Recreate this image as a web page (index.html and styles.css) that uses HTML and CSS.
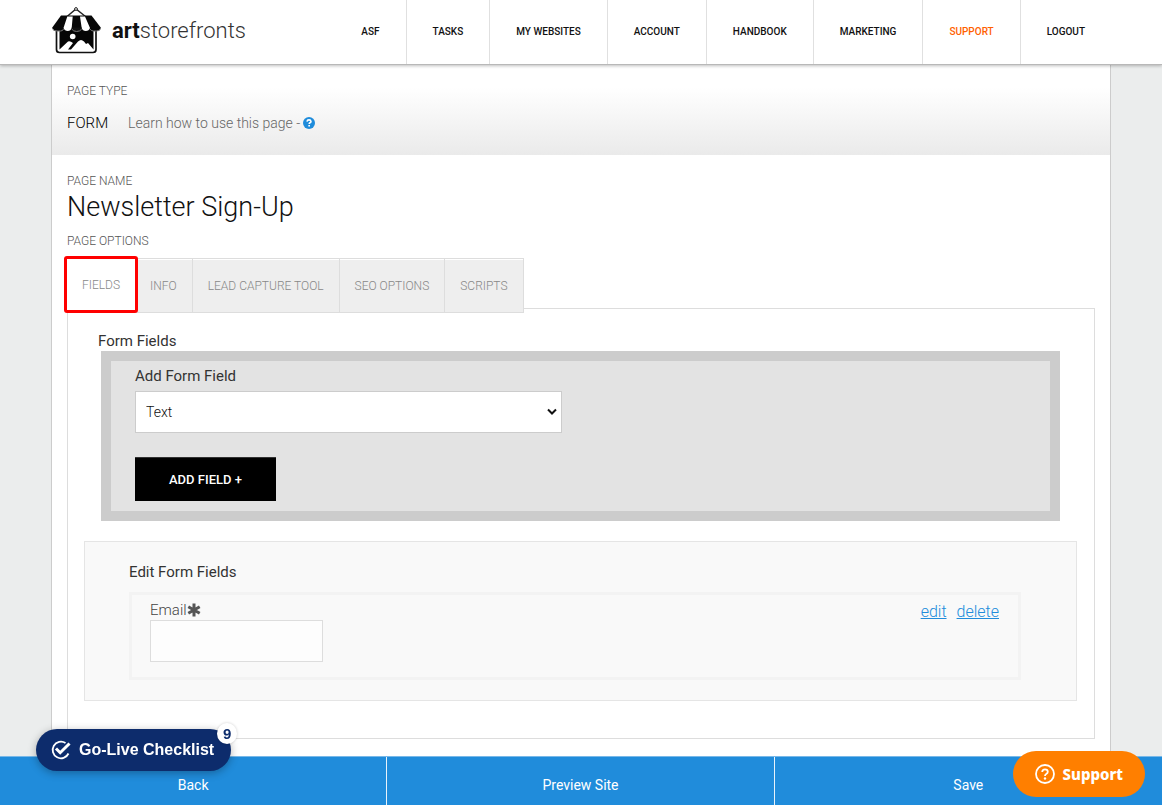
FILE: index.html
```html
<!DOCTYPE html>
<html lang="en">
<head>
<meta charset="utf-8">
<meta name="viewport" content="width=device-width, initial-scale=1">
<title>Newsletter Sign-Up - Art Storefronts</title>
<link rel="stylesheet" href="styles.css">
</head>
<body>
<header class="topbar">
  <div class="topbar-inner">
    <a class="brand" href="#">
      <svg class="brand-mark" viewBox="0 0 50 47" aria-hidden="true">
        <path d="M16 9.500L25 2L34.500 9.500" fill="none" stroke="#222" stroke-width="1.400"/>
        <circle cx="25" cy="2" r="1.400" fill="#fff" stroke="#222"/>
        <path d="M5.500 22V42.500q0 3 3 3H42q3 0 3-3V22" fill="#fff" stroke="#111" stroke-width="1.700"/>
        <path d="M8.500 21V42.500L17 34.500Q19 33.500 22 36L17 42.500H20L27 34.500Q30 31.500 33 34.500L35 37L37 36L42.500 42.500V21Z" fill="#050505"/>
        <circle cx="21.700" cy="29.500" r="2.800" fill="#fff"/>
        <path d="M10 8.500H40.500L49.700 20.500q0 3.500-4 3.500H5.300q-4 0-4-3.500Z" fill="#080808"/>
        <path d="M16.300 9.500H21.700L20.700 21q-1 3-4 3t-4.200-3ZM29 9.500H34L39 21q-1 3-4.200 3t-4.100-3Z" fill="#fff"/>
        <path d="M20.700 20.500V22q1.500 2.500 5 2.500t5-2.500V20.500Z" fill="#111"/>
        <path d="M2 22q1 2 4 2h3.500q2.500 0 3-2M20.700 22q1.500 2.500 5 2.500t5-2.500M39 22q1 2 3.500 2H45.500q3 0 3.700-2" fill="none" stroke="#777" stroke-width="1"/>
      </svg>
      <span class="brand-name"><b>art</b>storefronts</span>
    </a>
    <nav class="main-nav">
      <a href="#">ASF</a>
      <a href="#">Tasks</a>
      <a href="#">My Websites</a>
      <a href="#">Account</a>
      <a href="#">Handbook</a>
      <a href="#">Marketing</a>
      <a class="is-highlighted" href="#">Support</a>
      <a href="#">Logout</a>
    </nav>
  </div>
</header>

<main class="page">
  <section class="page-type">
    <p class="caption">Page Type</p>
    <div class="type-row">
      <span class="type-name">FORM</span>
      <a class="help-link" href="#">Learn how to use this page -
        <svg class="help-icon" viewBox="0 0 12 12" aria-hidden="true">
          <circle cx="6" cy="6" r="6" fill="#1f8cdb"/>
          <path d="M4 4.600Q4.200 2.900 6 2.900T8 4.500Q8 5.300 7 5.800Q6.200 6.200 6.200 7" fill="none" stroke="#fff" stroke-width="1.600"/>
          <path d="M5.300 8h1.700v1.600H5.300z" fill="#fff"/>
        </svg>
      </a>
    </div>
  </section>

  <section class="page-body">
    <p class="caption">Page Name</p>
    <h1 class="page-title">Newsletter Sign-Up</h1>
    <p class="caption">Page Options</p>

    <div class="tabs" role="tablist">
      <button class="tab is-active" type="button" role="tab" aria-selected="true">Fields</button>
      <button class="tab" type="button" role="tab">Info</button>
      <button class="tab" type="button" role="tab">Lead Capture Tool</button>
      <button class="tab" type="button" role="tab">SEO Options</button>
      <button class="tab" type="button" role="tab">Scripts</button>
    </div>

    <div class="tab-panel">
      <h2 class="heading panel-heading">Form Fields</h2>
      <div class="add-box">
        <label class="heading" for="field-type">Add Form Field</label>
        <div class="select-wrap">
          <select class="select" id="field-type"><option>Text</option></select>
          <svg class="select-arrow" viewBox="0 0 10 8" aria-hidden="true"><path d="M1 1.500L5 5.500L9 1.500" fill="none" stroke="#111" stroke-width="2"/></svg>
        </div>
        <button class="add-button" type="button">ADD FIELD +</button>
      </div>

      <div class="edit-box">
        <h2 class="heading">Edit Form Fields</h2>
        <div class="field-row">
          <div class="field">
            <label class="field-label" for="email">Email<svg class="required" viewBox="0 0 14 14" aria-hidden="true"><path d="M7 0.500V13.500M1.300 3.700L12.700 10.300M12.700 3.700L1.300 10.300" stroke="#555" stroke-width="3"/></svg></label>
            <input class="text-input" id="email" type="text">
          </div>
          <div class="field-actions">
            <a href="#">edit</a>
            <a href="#">delete</a>
          </div>
        </div>
      </div>
    </div>
  </section>
</main>

<footer class="action-bar">
  <button type="button">Back</button>
  <button type="button">Preview Site</button>
  <button type="button">Save</button>
</footer>

<button class="checklist" type="button">
  <svg class="checklist-icon" viewBox="0 0 20 20" aria-hidden="true">
    <path d="M14.500 3A8.300 8.300 0 1 0 17.500 13.500" fill="none" stroke="#fff" stroke-width="1.800"/>
    <path d="M5 8.500L9.200 12.700L18.500 3.500" fill="none" stroke="#fff" stroke-width="3"/>
  </svg>
  Go-Live Checklist
  <span class="badge">9</span>
</button>

<button class="support" type="button">
  <svg class="support-icon" viewBox="0 0 20 20" aria-hidden="true">
    <circle cx="10" cy="10" r="9" fill="none" stroke="#fff" stroke-width="1.800"/>
    <path d="M7.200 8Q7.300 5.300 10 5.300T12.800 7.700Q12.800 9 11.200 10Q10 10.700 10 12" fill="none" stroke="#fff" stroke-width="1.800"/>
    <circle cx="10" cy="14.500" r="1.200" fill="#fff"/>
  </svg>
  Support
</button>
</body>
</html>
```
FILE: styles.css
```css
:root {
  --line: #ddd;
  --blue: #208cdb;
  --font: Roboto, "Liberation Sans", sans-serif;
}

* { box-sizing: border-box; }

body {
  display: flex;
  flex-direction: column;
  min-height: 100vh;
  margin: 0;
  background: #ebeded;
  color: #222;
  font-family: var(--font);
  font-size: 15px;
  font-weight: 300;
}

h1, h2, p { margin: 0; }
button, input, select { font-family: inherit; }
svg { display: block; }

.topbar {
  position: relative;
  background: #fff;
  border-bottom: 1px solid #b8b8b8;
  box-shadow: 0 1px 3px rgba(0, 0, 0, 0.25);
}

.topbar-inner {
  display: flex;
  justify-content: space-between;
  width: 100%;
  max-width: 1060px;
  height: 64px;
  margin: 0 auto;
}

.brand {
  display: flex;
  align-items: center;
  gap: 11px;
  height: 60px;
  color: #333;
  text-decoration: none;
}

.brand-mark { width: 50px; height: 47px; }
.brand-name { font-size: 22px; }
.brand-name b { color: #111; font-weight: 700; }

.main-nav { display: flex; }

.main-nav a {
  padding: 0 26px;
  border-left: 1px solid #e0e0e0;
  color: #111;
  font-size: 10px;
  font-weight: 500;
  line-height: 64px;
  text-decoration: none;
  text-transform: uppercase;
}

.main-nav a:first-child { border-left: 0; }
.main-nav a.is-highlighted { color: #ff6100; }

.page {
  flex: 1;
  width: 100%;
  max-width: 1060px;
  margin: 0 auto;
  background: #fff;
  border: 1px solid #ccc;
  border-width: 0 1px;
}

.page-type {
  padding: 16px 15px 22px;
  background: linear-gradient(#fff 25%, #eaeaea);
}

.caption {
  color: #555;
  font-size: 12px;
  line-height: 20px;
  text-transform: uppercase;
}

.type-row {
  display: flex;
  gap: 20px;
  margin-top: 12px;
  font-size: 14px;
  line-height: 20px;
}

.type-name { color: #000; font-size: 15px; }

.help-link {
  display: flex;
  align-items: center;
  gap: 3px;
  color: #666;
  text-decoration: none;
}

.help-icon { width: 12px; height: 12px; }

.page-body { padding: 16px 15px; }

.page-title {
  margin-bottom: 8px;
  color: #111;
  font-size: 27px;
  font-weight: 300;
  line-height: 32px;
}

.tabs {
  position: relative;
  display: flex;
  margin: 7px 0 -5px;
}

.tab {
  height: 55px;
  padding: 0 15px;
  border: 1px solid var(--line);
  border-left: 0;
  background: #eee;
  box-shadow: inset 0 1px #fff;
  color: #888;
  font-size: 12px;
  font-weight: 300;
  text-transform: uppercase;
}

.tab.is-active {
  z-index: 1;
  height: 57px;
  margin: -2px -3px 0 -3px;
  border: 3px solid #f00;
  border-radius: 3px;
  background: #fff;
}

.tab-panel {
  padding: 22px 17px 37px 16px;
  border: 1px solid var(--line);
}

.heading {
  display: block;
  color: #333;
  font-size: 15px;
  font-weight: 400;
  line-height: 20px;
}

.panel-heading { padding-left: 14px; }

.add-box {
  margin: 0 17px 20px;
  padding: 5px 24px 10px;
  border: 10px solid #ccc;
  background: #e3e3e3;
}

.select-wrap {
  display: grid;
  align-items: center;
  width: 100%;
  max-width: 427px;
  margin: 5px 0 24px;
}

.select {
  grid-area: 1 / 1;
  width: 100%;
  height: 42px;
  padding: 0 10px 1px;
  border: 1px solid #ccc;
  border-radius: 0;
  background: #fff;
  color: #111;
  font-size: 14px;
  font-weight: 300;
  appearance: none;
}

.select-arrow {
  grid-area: 1 / 1;
  justify-self: end;
  width: 10px;
  height: 8px;
  margin-right: 5px;
  pointer-events: none;
}

.add-button {
  display: block;
  height: 44px;
  padding: 0 34px 1px;
  border: 0;
  border-top: 1px solid #333;
  background: #000;
  color: #fff;
  font-size: 13px;
  font-weight: 500;
}

.edit-box {
  padding: 20px 55px 20px 44px;
  border: 1px solid #e5e5e5;
  background: #f9f9f9;
}

.field-row {
  display: flex;
  justify-content: space-between;
  margin-top: 10px;
  padding: 5px 19px 15px 18px;
  border: 3px solid #f3f3f3;
}

.field-label {
  display: flex;
  align-items: center;
  color: #444;
  font-size: 15px;
  line-height: 20px;
}

.required { width: 14px; height: 14px; }

.text-input {
  display: block;
  width: 173px;
  height: 42px;
  border: 1px solid var(--line);
  background: #fdfdfd;
}

.field-actions {
  display: flex;
  gap: 10px;
  padding-top: 2px;
  font-size: 16px;
  line-height: 20px;
}

.field-actions a { color: var(--blue); }

.action-bar {
  display: grid;
  grid-template-columns: repeat(3, 1fr);
  border-top: 1px solid #78b8e8;
}

.action-bar button {
  height: 48px;
  padding: 8px 0 0;
  border: 0;
  border-right: 1px solid #e8f3fb;
  background: var(--blue);
  color: #fff;
  font-size: 14px;
  font-weight: 400;
}

.action-bar button:last-child { border-right: 0; }

.checklist,
.support {
  position: fixed;
  display: flex;
  align-items: center;
  border: 0;
  border-radius: 24px;
  color: #fff;
}

.checklist {
  bottom: 34px;
  left: 36px;
  gap: 8px;
  height: 42px;
  padding: 0 17px 0 15px;
  background: #0d2c6c;
  box-shadow: 0 2px 8px rgba(0, 0, 0, 0.3);
  font-family: "Liberation Sans", Arial, sans-serif;
  font-size: 16px;
  font-weight: 700;
}

.checklist-icon { width: 20px; height: 20px; }

.badge {
  position: absolute;
  top: -6px;
  right: -6px;
  width: 20px;
  border-radius: 50%;
  background: #fff;
  box-shadow: 0 0 3px rgba(0, 0, 0, 0.2);
  color: #0d2c6c;
  font-size: 15px;
  line-height: 21px;
}

.support {
  right: 17px;
  bottom: 8px;
  gap: 8px;
  height: 46px;
  padding: 0 22px;
  background: #ff7f00;
  font-family: "Noto Sans", "Open Sans", sans-serif;
  font-size: 15px;
  font-weight: 800;
}

.support-icon { width: 20px; height: 20px; }
```
